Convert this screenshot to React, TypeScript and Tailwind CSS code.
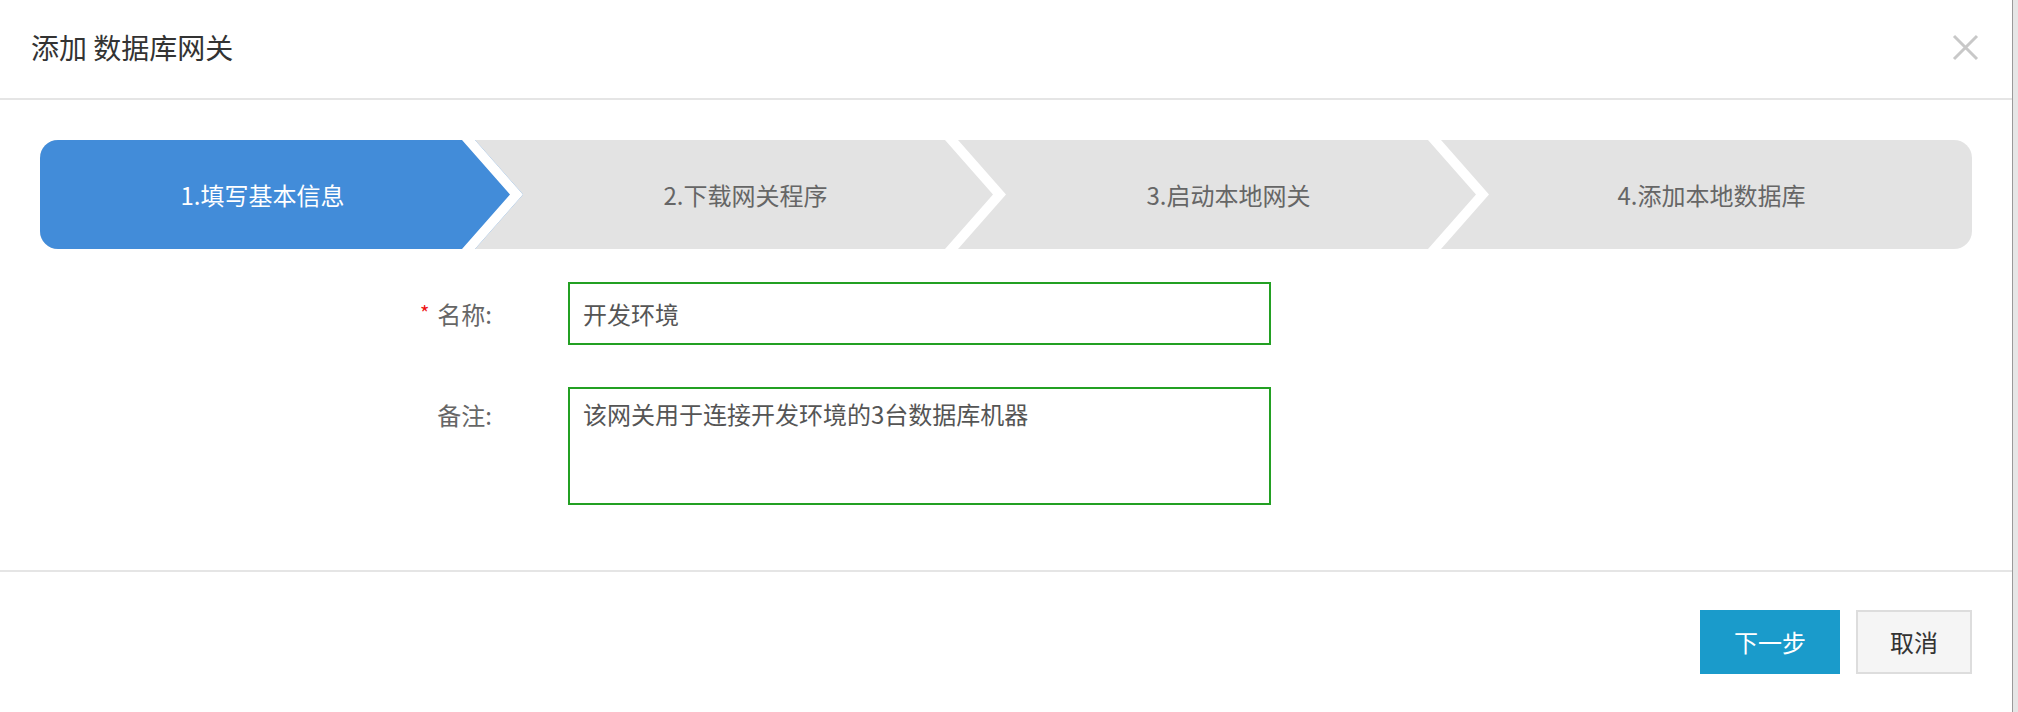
import React from 'react';

const steps = ['1.填写基本信息', '2.下载网关程序', '3.启动本地网关', '4.添加本地数据库'];

const Chevron = () => (
  <svg
    className="absolute right-0 top-0 h-full w-[62px]"
    viewBox="0 0 62 109"
    preserveAspectRatio="none"
  >
    <polygon points="14,0 62,0 62,54.5" fill="#e3e3e3" />
    <polygon points="62,54.5 62,109 14,109" fill="#e3e3e3" />
    <polygon points="1,0 14,0 62,54.5 14,109 1,109 49,54.5" fill="#ffffff" />
  </svg>
);

const CloseIcon = () => (
  <svg width="27" height="27" viewBox="0 0 27 27">
    <path d="M2 2 L25 25 M25 2 L2 25" stroke="#c8c8c8" strokeWidth="3" />
  </svg>
);

export default function App() {
  return (
    <div className="flex h-[712px] w-full bg-[#e6e6e6] font-['Noto_Sans_CJK_SC','Noto_Sans',sans-serif]">
      <div className="flex w-[2013px] flex-col border-r border-[#9a9a9a] bg-white">
        {/* header */}
        <div className="flex h-[100px] items-center justify-between border-b-2 border-[#e5e5e5] pl-[31px] pr-[33px] pb-[4px]">
          <h2 className="text-[28px] leading-none text-[#333]">添加 数据库网关</h2>
          <CloseIcon />
        </div>

        {/* body */}
        <div className="h-[470px] px-[40px] pt-[40px]">
          <div className="flex h-[109px] overflow-hidden rounded-[18px] bg-[#e3e3e3]">
            {steps.map((s, i) => (
              <div
                key={s}
                className={
                  i === 0
                    ? 'relative flex flex-1 items-center justify-center bg-[#428cd9] pr-[38px] text-[24px] text-white'
                    : 'relative flex flex-1 items-center justify-center pr-[38px] text-[24px] text-[#666]'
                }
              >
                <span>{s}</span>
                {i < steps.length - 1 && <Chevron />}
              </div>
            ))}
          </div>

          <div className="mt-[33px] flex items-center">
            <label className="w-[528px] pr-[76px] text-right text-[24px] text-[#666]">
              <span className="mr-[8px] inline-block align-[3px] text-[20px] leading-none text-[#ee1111]">*</span>名称:
            </label>
            <input
              readOnly
              defaultValue="开发环境"
              className="h-[63px] w-[703px] border-2 border-[#23a023] px-[13px] text-[24px] text-[#555] outline-none"
            />
          </div>

          <div className="mt-[42px] flex items-start">
            <label className="w-[528px] pr-[76px] pt-[10px] text-right text-[24px] leading-[36px] text-[#666]">
              备注:
            </label>
            <textarea
              readOnly
              defaultValue="该网关用于连接开发环境的3台数据库机器"
              className="h-[118px] w-[703px] resize-none border-2 border-[#23a023] px-[13px] pt-[7px] text-[24px] leading-[36px] text-[#555] outline-none"
            />
          </div>
        </div>

        {/* footer */}
        <div className="flex flex-1 items-start justify-end gap-[16px] border-t-2 border-[#e5e5e5] pr-[40px] pt-[38px]">
          <button className="h-[64px] w-[140px] bg-[#1a9bcb] text-[24px] text-white">下一步</button>
          <button className="h-[64px] w-[116px] border-2 border-[#dddddd] bg-[#f5f5f5] text-[24px] text-[#333]">
            取消
          </button>
        </div>
      </div>
    </div>
  );
}
